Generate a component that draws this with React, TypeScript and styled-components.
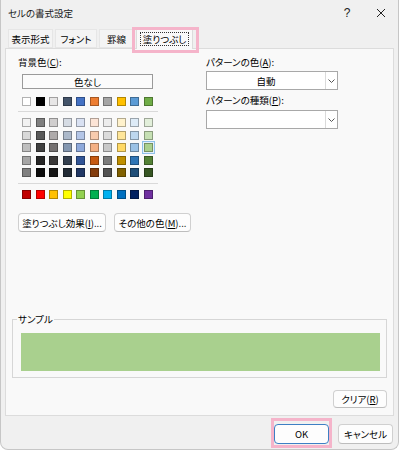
import styled, { createGlobalStyle } from "styled-components";

const GlobalStyle = createGlobalStyle`
  body {
    margin: 0;
    background: #ffffff;
    font-family: "Noto Sans CJK JP", "Noto Sans", sans-serif;
    font-feature-settings: "palt";
    color: #000;
  }
`;

const THEME_BASE = [
  "#FFFFFF", "#000000", "#E7E6E6", "#44546A", "#4472C4",
  "#ED7D31", "#A5A5A5", "#FFC000", "#5B9BD5", "#70AD47",
];

// 5 rows of tints/shades, one array per row
const THEME_ROWS = [
  ["#F2F2F2", "#7F7F7F", "#D0CECE", "#D6DCE4", "#D9E1F2", "#FCE4D6", "#EDEDED", "#FFF2CC", "#DDEBF7", "#E2EFDA"],
  ["#D9D9D9", "#595959", "#AEAAAA", "#ACB9CA", "#B4C6E7", "#F8CBAD", "#DBDBDB", "#FFE699", "#BDD7EE", "#C6E0B4"],
  ["#BFBFBF", "#404040", "#757171", "#8497B0", "#8EA9DB", "#F4B084", "#C9C9C9", "#FFD966", "#9BC2E6", "#A9D08E"],
  ["#A6A6A6", "#262626", "#3A3838", "#333F4F", "#305496", "#C65911", "#7B7B7B", "#BF8F00", "#2F75B5", "#548235"],
  ["#808080", "#0D0D0D", "#161616", "#222B35", "#203764", "#833C0C", "#525252", "#806000", "#1F4E78", "#375623"],
];

const STANDARD = [
  "#C00000", "#FF0000", "#FFC000", "#FFFF00", "#92D050",
  "#00B050", "#00B0F0", "#0070C0", "#002060", "#7030A0",
];

const SELECTED = "#A9D08E";

const TABS = [
  { label: "表示形式", w: 45 },
  { label: "フォント", w: 42 },
  { label: "罫線", w: 35 },
];

const Window = styled.div`
  position: relative;
  box-sizing: border-box;
  width: 399px;
  height: 450px;
  background: #f0f0f0;
  border: 1px solid #c6c6c6;
  border-top: none;
  border-radius: 0 0 8px 8px;
  display: flex;
  flex-direction: column;
  font-size: 9.5px;
`;

const TitleBar = styled.div`
  height: 26px;
  display: flex;
  align-items: center;
  padding-left: 7px;
`;

const Title = styled.span`
  font-size: 9.5px;
  line-height: 14px;
  color: #1a1a1a;
`;

const TitleButton = styled.div`
  width: 34px;
  height: 26px;
  display: flex;
  align-items: center;
  justify-content: center;
  font-family: "Liberation Sans", sans-serif;
  font-size: 12px;
  color: #222;
  &:first-of-type {
    margin-left: auto;
  }
`;

const TabRow = styled.div`
  height: 22px;
  display: flex;
  align-items: flex-end;
  gap: 2px;
  padding-left: 7px;
`;

const Tab = styled.div<{ $active?: boolean; $w: number }>`
  position: relative;
  box-sizing: border-box;
  width: ${({ $w }) => $w}px;
  height: ${({ $active }) => ($active ? "21px" : "19px")};
  margin-bottom: ${({ $active }) => ($active ? "-1px" : "0")};
  display: flex;
  align-items: center;
  justify-content: center;
  line-height: 14px;
  white-space: nowrap;
  background: ${({ $active }) => ($active ? "#f9f9f9" : "#f4f4f4")};
  border: 1px solid ${({ $active }) => ($active ? "#dcdcdc" : "#e6e6e6")};
  border-bottom: ${({ $active }) => ($active ? "none" : "1px solid #e6e6e6")};
  z-index: ${({ $active }) => ($active ? 1 : 0)};

  &::after {
    content: ${({ $active }) => ($active ? '""' : "none")};
    position: absolute;
    top: -2px;
    left: -5px;
    right: -7px;
    bottom: -4px;
    border: 3px solid #f5b4ca;
  }
`;

const FocusText = styled.span`
  padding: 0 2px;
  border: 1px dotted #333;
  line-height: 12px;
`;

const Panel = styled.div`
  box-sizing: border-box;
  height: 368px;
  margin: 0 4px;
  padding-top: 6px;
  background: #f9f9f9;
  border: 1px solid #dcdcdc;
  display: flex;
  flex-direction: column;
`;

const TopArea = styled.div`
  display: flex;
  padding-left: 12px;
`;

const LeftCol = styled.div`
  flex: 0 0 188px;
  display: flex;
  flex-direction: column;
`;

const RightCol = styled.div`
  width: 132px;
  display: flex;
  flex-direction: column;
`;

const Label = styled.div<{ $gap?: number }>`
  line-height: 14px;
  margin-top: ${({ $gap }) => $gap ?? 0}px;
  white-space: nowrap;
`;

const NoColorButton = styled.div`
  box-sizing: border-box;
  width: 131px;
  height: 15px;
  margin: 5px 0 0 4px;
  display: flex;
  align-items: center;
  justify-content: center;
  background: #fbfbfb;
  border: 1px solid #9a9a9a;
`;

const SwatchRow = styled.div<{ $gap: number }>`
  display: flex;
  gap: 4.5px;
  margin: ${({ $gap }) => $gap}px 0 0 4px;
`;

const ThemeGrid = styled.div`
  display: flex;
  flex-direction: column;
  gap: 3.5px;
  margin-top: 6px;
`;

const Swatch = styled.div<{ $selected?: boolean }>`
  box-sizing: border-box;
  width: 9px;
  height: 9px;
  border: 1px solid rgba(0, 0, 0, 0.3);
  box-shadow: ${({ $selected }) =>
    $selected ? "0 0 0 1px #e3f0fb, 0 0 0 2px #8fc0e8" : "none"};
`;

const Divider = styled.div<{ $gap: number }>`
  width: 140px;
  height: 1px;
  margin-top: ${({ $gap }) => $gap}px;
  background: #d9d9d9;
`;

const ButtonRow = styled.div`
  display: flex;
  gap: 8px;
  margin-top: 14px;
`;

const Button = styled.div<{ $w: number; $h?: number; $primary?: boolean }>`
  position: relative;
  box-sizing: border-box;
  width: ${({ $w }) => $w}px;
  height: ${({ $h }) => $h ?? 19}px;
  display: flex;
  align-items: center;
  justify-content: center;
  white-space: nowrap;
  background: #fdfdfd;
  border: 1px solid ${({ $primary }) => ($primary ? "#3d7fc4" : "#d0d0d0")};
  border-bottom-color: ${({ $primary }) => ($primary ? "#3d7fc4" : "#bdbdbd")};
  border-radius: 4px;
  font-family: "Noto Sans CJK JP", "Liberation Sans", sans-serif;

  &::after {
    content: ${({ $primary }) => ($primary ? '""' : "none")};
    position: absolute;
    top: -7px;
    left: -4px;
    right: -4px;
    bottom: -5px;
    border: 3px solid #f5b4ca;
  }
`;

const Select = styled.div<{ $gap: number }>`
  box-sizing: border-box;
  width: 132px;
  height: 19px;
  margin-top: ${({ $gap }) => $gap}px;
  display: flex;
  background: #ffffff;
  border: 1px solid #a8a8a8;
`;

const SelectValue = styled.div`
  flex: 1;
  display: flex;
  align-items: center;
  justify-content: center;
`;

const SelectArrow = styled.div`
  width: 11px;
  display: flex;
  align-items: center;
  justify-content: center;
  border-left: 1px solid #dadada;
`;

const SampleBox = styled.fieldset`
  margin: 80px 6px 0;
  padding: 7px 6px 6px 8px;
  border: 1px solid #d6d6d6;
  min-width: 0;
`;

const SampleLegend = styled.legend`
  margin-left: -4px;
  padding: 0 1px;
  line-height: 14px;
`;

const SampleFill = styled.div<{ $color: string }>`
  height: 38px;
  background: ${({ $color }) => $color};
`;

const ClearRow = styled.div`
  display: flex;
  justify-content: flex-end;
  margin: 12px 6px 0 0;
`;

const Footer = styled.div`
  display: flex;
  justify-content: flex-end;
  gap: 9px;
  padding: 8px 5px 0 0;
`;

const Chevron = () => (
  <svg width="7" height="4" viewBox="0 0 7 4">
    <polyline points="0.5,0.5 3.5,3.5 6.5,0.5" fill="none" stroke="#555" strokeWidth="1" />
  </svg>
);

const CloseIcon = () => (
  <svg width="10" height="10" viewBox="0 0 10 10">
    <path d="M1 1 L9 9 M9 1 L1 9" stroke="#222" strokeWidth="1" />
  </svg>
);

export default function App() {
  return (
    <>
      <GlobalStyle />
      <Window>
        <TitleBar>
          <Title>セルの書式設定</Title>
          <TitleButton>?</TitleButton>
          <TitleButton>
            <CloseIcon />
          </TitleButton>
        </TitleBar>

        <TabRow>
          {TABS.map((t) => (
            <Tab key={t.label} $w={t.w}>
              {t.label}
            </Tab>
          ))}
          <Tab $active $w={57}>
            <FocusText>塗りつぶし</FocusText>
          </Tab>
        </TabRow>

        <Panel>
          <TopArea>
            <LeftCol>
              <Label>
                背景色(<u>C</u>):
              </Label>
              <NoColorButton>色なし</NoColorButton>
              <SwatchRow $gap={8}>
                {THEME_BASE.map((c) => (
                  <Swatch key={c} style={{ background: c }} />
                ))}
              </SwatchRow>
              <Divider $gap={5} />
              <ThemeGrid>
                {THEME_ROWS.map((row, i) => (
                  <SwatchRow key={i} $gap={0}>
                    {row.map((c) => (
                      <Swatch key={c} style={{ background: c }} $selected={c === SELECTED} />
                    ))}
                  </SwatchRow>
                ))}
              </ThemeGrid>
              <Divider $gap={6} />
              <SwatchRow $gap={6}>
                {STANDARD.map((c, i) => (
                  <Swatch key={i} style={{ background: c }} />
                ))}
              </SwatchRow>
              <ButtonRow>
                <Button $w={88}>
                  塗りつぶし効果(<u>I</u>)...
                </Button>
                <Button $w={77}>
                  その他の色(<u>M</u>)...
                </Button>
              </ButtonRow>
            </LeftCol>

            <RightCol>
              <Label>
                パターンの色(<u>A</u>):
              </Label>
              <Select $gap={2}>
                <SelectValue>自動</SelectValue>
                <SelectArrow>
                  <Chevron />
                </SelectArrow>
              </Select>
              <Label $gap={3}>
                パターンの種類(<u>P</u>):
              </Label>
              <Select $gap={3}>
                <SelectValue />
                <SelectArrow>
                  <Chevron />
                </SelectArrow>
              </Select>
            </RightCol>
          </TopArea>

          <SampleBox>
            <SampleLegend>サンプル</SampleLegend>
            <SampleFill $color={SELECTED} />
          </SampleBox>

          <ClearRow>
            <Button $w={54} $h={18}>
              クリア(<u>R</u>)
            </Button>
          </ClearRow>
        </Panel>

        <Footer>
          <Button $w={55} $h={20} $primary>
            OK
          </Button>
          <Button $w={55} $h={20}>
            キャンセル
          </Button>
        </Footer>
      </Window>
    </>
  );
}
